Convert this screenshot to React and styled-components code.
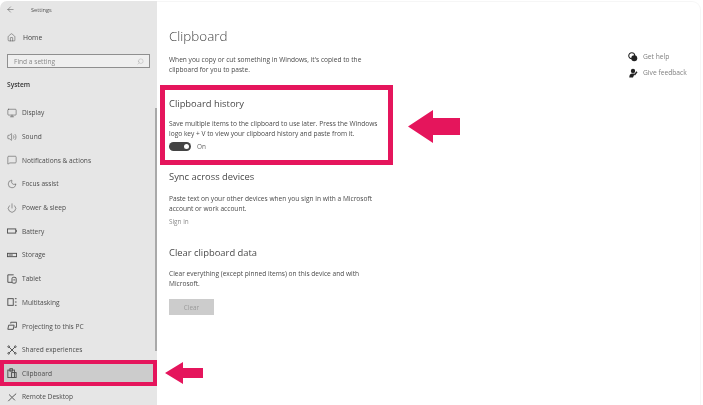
import React from 'react';
import styled, { createGlobalStyle } from 'styled-components';
import { ArrowLeft, Home, Search, Monitor, Volume2, MessageSquare, Moon, Power } from 'lucide-react';

const GlobalStyle = createGlobalStyle`
  html, body {
    margin: 0;
    padding: 0;
    background: #fff;
    overflow: hidden;
  }
`;

const Page = styled.div`
  position: relative;
  width: 703px;
  height: 405px;
  display: flex;
  overflow: hidden;
  font-family: "Open Sans", "Noto Sans", "Liberation Sans", sans-serif;
  color: #3a3a3a;
  filter: blur(0.5px);
`;

const Sidebar = styled.aside`
  position: relative;
  width: 157px;
  flex: none;
  margin-top: 1px;
  background: #e6e6e6;
  border-top-left-radius: 7px;
  display: flex;
  flex-direction: column;
  overflow: hidden;

  & > * {
    flex: none;
  }
`;

const TitleBar = styled.div`
  height: 17px;
  display: flex;
  align-items: center;
  gap: 16px;
  padding-left: 6px;
  font-size: 5.6px;
  color: #555;
`;

const HomeRow = styled.div`
  margin-top: 10px;
  height: 18px;
  display: flex;
  align-items: center;
  gap: 7px;
  padding-left: 7px;
  font-size: 6.8px;
  color: #444;
`;

const SearchBox = styled.div`
  margin: 8px 7px 0;
  height: 14px;
  box-sizing: border-box;
  display: flex;
  align-items: center;
  justify-content: space-between;
  padding: 0 5px 0 6px;
  background: #efefef;
  border: 1px solid #8f8f8f;
  font-size: 6.6px;
  color: #8a8a8a;
`;

const SectionLabel = styled.div`
  margin-top: 11px;
  padding-left: 7px;
  font-size: 6.6px;
  font-weight: 600;
  line-height: 11px;
  color: #333;
`;

const NavList = styled.nav`
  margin-top: 11px;
  display: flex;
  flex-direction: column;
`;

const NavItem = styled.div`
  height: 23.7px;
  flex: none;
  box-sizing: border-box;
  display: flex;
  align-items: center;
  gap: 5px;
  padding-left: 7px;
  font-size: 6.6px;
  color: #4c4c4c;
  background: ${p => (p.$active ? '#cccccc' : 'transparent')};
  outline: ${p => (p.$active ? '4.5px solid #e5155c' : 'none')};
  outline-offset: -4.5px;
  position: relative;
  ${p => p.$active && `
    height: 26px;
    margin: -1.5px 0 -1px;
    z-index: 1;
  `}
`;

const ScrollThumb = styled.div`
  position: absolute;
  right: 0;
  top: 107px;
  width: 2px;
  height: 243px;
  background: #a9a9a9;
`;

const Main = styled.main`
  flex: 1;
  display: flex;
  margin: 1px 2px 0 0;
  padding-left: 3px;
  min-width: 0;
  border-top: 1px solid #f6f6f6;
  border-right: 1px solid #f6f6f6;
  border-top-right-radius: 9px;
`;

const Content = styled.div`
  width: 233px;
  flex: none;
  display: flex;
  flex-direction: column;
`;

const PageTitle = styled.h1`
  margin: 23px 0 0 9px;
  font-size: 13.4px;
  font-weight: 300;
  line-height: 22px;
  color: #444;
`;

const Description = styled.p`
  margin: ${p => p.$top || 8}px 0 0 9px;
  width: 212px;
  font-size: 6.6px;
  line-height: 10px;
  color: #4a4a4a;
`;

const HistoryBox = styled.section`
  margin-top: 10px;
  height: 80px;
  box-sizing: border-box;
  border: 5px solid #e5155c;
  padding: 7px 0 0 4px;
  display: flex;
  flex-direction: column;
`;

const SectionTitle = styled.h2`
  margin: ${p => p.$top || 0}px 0 0 ${p => p.$left || 0}px;
  font-size: 9.4px;
  font-weight: 400;
  line-height: 14px;
  color: #4a4a4a;
`;

const BoxText = styled(Description)`
  margin: 8px 0 0;
`;

const ToggleRow = styled.div`
  margin-top: 3px;
  display: flex;
  align-items: center;
  gap: 6px;
  font-size: 6.4px;
  color: #666;
`;

const Toggle = styled.div`
  width: 22px;
  height: 9px;
  border-radius: 5px;
  background: #444;
  position: relative;

  &::after {
    content: '';
    position: absolute;
    right: 2px;
    top: 2px;
    width: 5px;
    height: 5px;
    border-radius: 50%;
    background: #fff;
  }
`;

const SignIn = styled.div`
  margin: 3px 0 0 9px;
  font-size: 6.4px;
  line-height: 10px;
  color: #8a8a8a;
`;

const ClearButton = styled.div`
  margin: 10px 0 0 9px;
  width: 45px;
  height: 16px;
  background: #cccccc;
  display: flex;
  align-items: center;
  justify-content: center;
  font-size: 6.4px;
  color: #9a9a9a;
`;

const ArrowSlot = styled.div`
  margin: 108px 0 0 15px;
  flex: none;
`;

const HelpColumn = styled.div`
  margin: 49px 0 0 auto;
  width: 72px;
  display: flex;
  flex-direction: column;
  gap: 5px;
`;

const HelpLink = styled.div`
  display: flex;
  align-items: center;
  gap: 5px;
  height: 11px;
  font-size: 6.7px;
  color: #808080;
`;

const LeftArrow = styled.svg`
  position: absolute;
  left: 165px;
  top: 362px;
`;

const Glyph = ({ children }) => (
  <svg width="10" height="10" viewBox="0 0 12 12" fill="none" stroke="currentColor" strokeWidth="1.1">
    {children}
  </svg>
);

const BatteryIcon = () => (
  <Glyph>
    <rect x="0.5" y="3.5" width="10" height="5" />
    <path d="M11.5 5v2" />
  </Glyph>
);

const StorageIcon = () => (
  <Glyph>
    <rect x="0.5" y="4" width="11" height="4" />
    <path d="M2 6h5" />
  </Glyph>
);

const TabletIcon = () => (
  <Glyph>
    <path d="M8 1H1v9h5" />
    <rect x="6" y="4" width="5" height="7" rx="1.5" />
    <path d="M8.5 6v2" />
  </Glyph>
);

const MultitaskIcon = () => (
  <Glyph>
    <rect x="1" y="2" width="6.5" height="8" />
    <path d="M9.5 2h2M9.5 6h2M9.5 10h2" />
  </Glyph>
);

const ProjectIcon = () => (
  <Glyph>
    <path d="M4.5 3V1.5h7v6H9" />
    <path d="M1 10l1-5h6.5l-1 5z" />
  </Glyph>
);

const SharedIcon = () => (
  <Glyph>
    <path d="M2.5 2.5l7 7M9.5 2.5l-7 7" />
    <circle cx="2" cy="2" r="1" />
    <circle cx="10" cy="2" r="1" />
    <circle cx="2" cy="10" r="1" />
    <circle cx="10" cy="10" r="1" />
  </Glyph>
);

const ClipboardIcon = () => (
  <Glyph>
    <rect x="1" y="2.5" width="8" height="9" />
    <rect x="3.5" y="0.8" width="3" height="3" />
    <rect x="5.5" y="5.5" width="5.5" height="6" />
  </Glyph>
);

const RemoteIcon = () => (
  <Glyph>
    <path d="M1.5 11L6 6.5M6 6.5L11 2M6 6.5L2.5 3M6.5 7l3 3" />
  </Glyph>
);

const HelpIcon = () => (
  <svg width="10" height="10" viewBox="0 0 12 12" fill="#222">
    <circle cx="4.5" cy="4.5" r="3.6" fill="none" stroke="#222" strokeWidth="1.3" />
    <circle cx="7.5" cy="7.5" r="3.6" />
  </svg>
);

const FeedbackIcon = () => (
  <svg width="10" height="10" viewBox="0 0 12 12" fill="#222">
    <circle cx="6" cy="3.5" r="2.6" />
    <path d="M1.5 11.5c0-3.5 1.5-5 3.5-5h3L6 11.5z" />
    <path d="M7 8l3-4 1.4 1-3 4z" />
  </svg>
);

const navItems = [
  ['Display', <Monitor size={10} strokeWidth={1.3} />],
  ['Sound', <Volume2 size={10} strokeWidth={1.3} />],
  ['Notifications & actions', <MessageSquare size={10} strokeWidth={1.3} />],
  ['Focus assist', <Moon size={10} strokeWidth={1.3} />],
  ['Power & sleep', <Power size={10} strokeWidth={1.3} />],
  ['Battery', <BatteryIcon />],
  ['Storage', <StorageIcon />],
  ['Tablet', <TabletIcon />],
  ['Multitasking', <MultitaskIcon />],
  ['Projecting to this PC', <ProjectIcon />],
  ['Shared experiences', <SharedIcon />],
  ['Clipboard', <ClipboardIcon />, true],
  ['Remote Desktop', <RemoteIcon />],
];

function App() {
  return (
    <Page>
      <GlobalStyle />
      <Sidebar>
        <TitleBar>
          <ArrowLeft size={9} strokeWidth={1.4} />
          <span>Settings</span>
        </TitleBar>
        <HomeRow>
          <Home size={9} strokeWidth={1.3} />
          <span>Home</span>
        </HomeRow>
        <SearchBox>
          <span>Find a setting</span>
          <Search size={7} strokeWidth={1.2} color="#999" style={{ transform: 'scaleX(-1)' }} />
        </SearchBox>
        <SectionLabel>System</SectionLabel>
        <NavList>
          {navItems.map(([label, icon, active]) => (
            <NavItem key={label} $active={active}>
              {icon}
              <span>{label}</span>
            </NavItem>
          ))}
        </NavList>
        <ScrollThumb />
      </Sidebar>
      <Main>
        <Content>
          <PageTitle>Clipboard</PageTitle>
          <Description>
            When you copy or cut something in Windows, it's copied to the clipboard for you to paste.
          </Description>
          <HistoryBox>
            <SectionTitle>Clipboard history</SectionTitle>
            <BoxText>
              Save multiple items to the clipboard to use later. Press the Windows logo key + V to view your clipboard history and paste from it.
            </BoxText>
            <ToggleRow>
              <Toggle />
              <span>On</span>
            </ToggleRow>
          </HistoryBox>
          <SectionTitle $top={5} $left={9}>Sync across devices</SectionTitle>
          <Description $top={10}>
            Paste text on your other devices when you sign in with a Microsoft account or work account.
          </Description>
          <SignIn>Sign in</SignIn>
          <SectionTitle $top={19} $left={9}>Clear clipboard data</SectionTitle>
          <Description $top={9}>
            Clear everything (except pinned items) on this device and with Microsoft.
          </Description>
          <ClearButton>Clear</ClearButton>
        </Content>
        <ArrowSlot>
          <svg width="52" height="33" viewBox="0 0 52 33">
            <polygon points="0,16.5 25,0 25,8 52,8 52,25 25,25 25,33" fill="#e5155c" />
          </svg>
        </ArrowSlot>
        <HelpColumn>
          <HelpLink>
            <HelpIcon />
            <span>Get help</span>
          </HelpLink>
          <HelpLink>
            <FeedbackIcon />
            <span>Give feedback</span>
          </HelpLink>
        </HelpColumn>
      </Main>
      <LeftArrow width="38" height="22" viewBox="0 0 38 22">
        <polygon points="0,11 18,0 18,6 38,6 38,16 18,16 18,22" fill="#e5155c" />
      </LeftArrow>
    </Page>
  );
}

export default App;
